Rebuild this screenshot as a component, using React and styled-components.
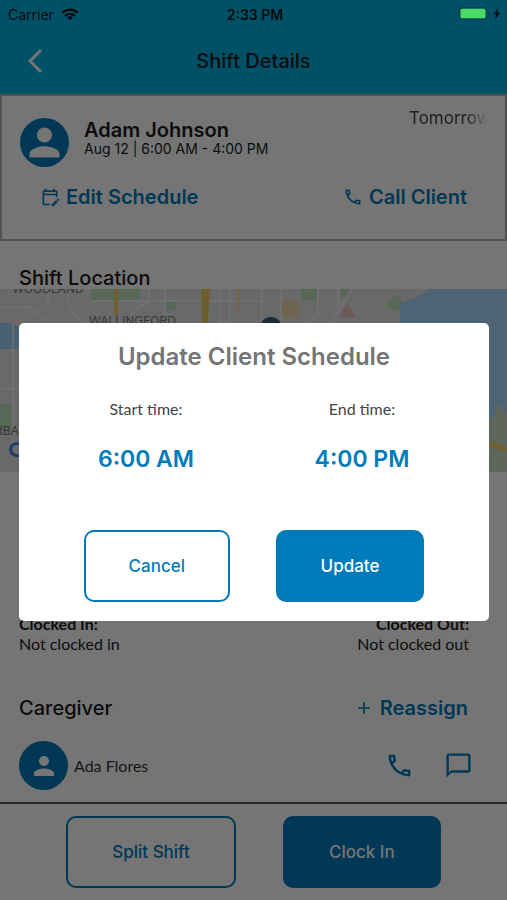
import React from 'react';
import styled, { createGlobalStyle } from 'styled-components';
import {
  MdAdd,
  MdChatBubbleOutline,
  MdOutlineCall,
  MdOutlineEditCalendar,
  MdPerson,
} from 'react-icons/md';

const GlobalStyle = createGlobalStyle`
  * {
    box-sizing: border-box;
  }
  body {
    margin: 0;
    background: #fff;
    font-family: Inter, 'Liberation Sans', sans-serif;
    color: #1c1c1c;
  }
`;

const Screen = styled.div`
  display: flex;
  flex-direction: column;
  min-height: 100vh;
`;

const StatusBar = styled.div`
  position: fixed;
  z-index: 3;
  top: 0;
  left: 0;
  right: 0;
  height: 28px;
  padding: 0 5px 0 8px;
  display: grid;
  grid-template-columns: 1fr auto 1fr;
  align-items: center;
  font-size: 14px;
  color: #00090c;
`;

const StatusGroup = styled.div`
  display: flex;
  align-items: center;
  justify-content: ${({ $end }) => ($end ? 'flex-end' : 'flex-start')};
  gap: 7px;
`;

const Clock = styled.span`
  font-weight: 600;
`;

const AppBar = styled.header`
  display: grid;
  grid-template-columns: 72px 1fr 72px;
  align-items: center;
  height: 94px;
  padding-top: 28px;
  background: #00aede;
`;

const BackButton = styled.button`
  display: flex;
  justify-content: center;
  padding: 0;
  border: 0;
  background: none;
  color: #fff;
`;

const AppTitle = styled.h1`
  margin: 0;
  text-align: center;
  font-size: 20px;
  font-weight: 500;
  line-height: 24px;
`;

const ClientCard = styled.section`
  height: 147px;
  padding: 12px 18px;
  border: 2px solid #b4b4b4;
`;

const ClientRow = styled.div`
  display: flex;
  align-items: flex-start;
  gap: 15px;
`;

const Avatar = styled.div`
  flex: none;
  display: flex;
  align-items: center;
  justify-content: center;
  width: 49px;
  height: 49px;
  margin-top: ${({ $top }) => $top ?? 0}px;
  border-radius: 50%;
  background: #007bba;
  color: #fff;
`;

const ClientText = styled.div`
  flex: 1;
  padding-top: 10px;
`;

const ClientName = styled.h2`
  margin: 0;
  font-size: 20px;
  font-weight: 600;
  line-height: 24px;
`;

const ClientShift = styled.p`
  margin: 0;
  font-size: 14px;
  font-weight: 400;
  line-height: 14px;
`;

const Day = styled.span`
  width: 78px;
  overflow: hidden;
  white-space: nowrap;
  font-size: 17px;
  line-height: 20px;
  color: #444;
  mask-image: linear-gradient(to right, #000 75%, transparent);
`;

const ClientActions = styled.div`
  display: flex;
  justify-content: space-between;
  padding: 18px 20px 0;
`;

const LinkButton = styled.button`
  display: flex;
  align-items: center;
  gap: ${({ $gap }) => $gap ?? 6}px;
  padding: 0;
  border: 0;
  background: none;
  color: #007bba;
  font-family: inherit;
  font-size: 20px;
  font-weight: 600;
  line-height: 24px;
`;

const Heading = styled.h2`
  margin: 0;
  font-size: 20px;
  font-weight: 500;
  line-height: 24px;
`;

const LocationHeading = styled(Heading)`
  padding: 25px 19px 0;
  margin-bottom: -1px;
`;

const Map = styled.svg`
  display: block;
  width: 100%;
  height: 183px;
`;

const ClockTimes = styled.section`
  display: flex;
  justify-content: space-between;
  padding: 142px 38px 0 19px;
  font-family: Lato, sans-serif;
  font-size: 16px;
  line-height: 20px;
`;

const ClockTime = styled.div`
  text-align: ${({ $end }) => ($end ? 'right' : 'left')};
`;

const CaregiverHead = styled.div`
  display: flex;
  justify-content: space-between;
  padding: 42px 39px 0 19px;
`;

const CaregiverRow = styled.div`
  display: flex;
  align-items: center;
  gap: 6px;
  padding: 21px 34px 12px 19px;
`;

const CaregiverName = styled.span`
  flex: 1;
  font-family: Lato, sans-serif;
  font-size: 16px;
  color: #333;
`;

const IconButton = styled.button`
  display: flex;
  margin-left: 24px;
  padding: 0;
  border: 0;
  background: none;
  color: #007bba;
`;

const Button = styled.button`
  height: 72px;
  padding: 0 ${({ $wide }) => ($wide ? 44 : 43)}px;
  border: 2px solid #007bba;
  border-radius: 10px;
  background: ${({ $filled }) => ($filled ? '#007bba' : 'transparent')};
  color: ${({ $filled }) => ($filled ? '#fff' : '#007bba')};
  font-family: inherit;
  font-size: 17px;
  font-weight: 500;
`;

const ButtonRow = styled.div`
  display: flex;
  justify-content: space-evenly;
  padding: 0 ${({ $inset }) => ($inset ? 19 : 0)}px;
`;

const BottomBar = styled.footer`
  flex: 1;
  padding: 12px 0;
  border-top: 2px solid #555;
`;

const Scrim = styled.div`
  position: fixed;
  z-index: 2;
  inset: 0;
  display: flex;
  align-items: center;
  padding: 44px 18px 0 19px;
  background: rgba(0, 0, 0, 0.54);
`;

const Dialog = styled.div`
  flex: 1;
  padding: 19px 0;
  border-radius: 5px;
  background: #fff;
`;

const DialogTitle = styled.h2`
  margin: 0;
  text-align: center;
  font-size: 24px;
  font-weight: 600;
  line-height: 30px;
  color: #757575;
`;

const Times = styled.div`
  display: grid;
  grid-template-columns: 1fr 1fr;
  padding: 27px 19px 56px;
`;

const TimeField = styled.div`
  display: flex;
  flex-direction: column;
  align-items: center;
  gap: 25px;
`;

const TimeLabel = styled.span`
  font-family: Lato, sans-serif;
  font-size: 16px;
  line-height: 20px;
  color: #444;
`;

const TimeButton = styled.button`
  padding: 0;
  border: 0;
  background: none;
  color: #007bba;
  font-family: inherit;
  font-size: 23px;
  font-weight: 600;
  line-height: 30px;
`;

const WifiIcon = () => (
  <svg width="18" height="13" viewBox="0 0 18 13" aria-hidden="true">
    <g fill="none" stroke="currentColor" strokeWidth="2.2">
      <path d="M1.2 4.8a11 11 0 0 1 15.6 0" />
      <path d="M4 7.9a7 7 0 0 1 10 0" />
    </g>
    <path d="M9 12.4 6.2 9.6a4 4 0 0 1 5.6 0z" fill="currentColor" />
  </svg>
);

const BatteryIcon = () => (
  <svg width="43" height="14" viewBox="0 0 43 14" aria-hidden="true">
    <rect x=".5" y=".5" width="27" height="12" rx="3" fill="none" stroke="#003b4b" />
    <rect x="1.5" y="1.7" width="25" height="9.6" rx="1.5" fill="#4cd964" />
    <path d="M29 4.5v4q1.6-.6 1.6-2t-1.6-2z" fill="#003b4b" />
    <path d="m39.5 1-5 6.2h2.8L36 12.4l5.2-6.6h-2.9z" fill="#00090c" />
  </svg>
);

const BackIcon = () => (
  <svg width="16" height="26" viewBox="0 0 16 26" aria-hidden="true">
    <path d="M13 2 2 13l11 11" fill="none" stroke="currentColor" strokeWidth="3" />
  </svg>
);

const LocationMap = () => (
  <Map viewBox="0 0 507 183" preserveAspectRatio="xMidYMid slice" role="img" aria-label="Map">
    <rect width="507" height="183" fill="#e4e5e6" />
    <path d="M0 34h12l7 4v22H0z" fill="#a0d2f6" />
    <g fill="#bfe3c0">
      <path d="M91 0h49v11H91zM165 13h11v8h-11zM301 0h16v11h-16zM341 0h8v8h-8z" />
      <path d="m385 16 12-11 8 11-8 7z" />
      <path d="M0 115h12v26H0z" />
    </g>
    <path d="M281 12h18v17h-18z" fill="#f0dcae" />
    <path d="m339 28 8-14 9 14z" fill="#eebfc0" />
    <path d="M507 0h-78l-8 6-21 9v19l7 149h100z" fill="#aadaff" />
    <path d="M507 124c-8-2-3-9-9-10l-4 14-6 4v51h19z" fill="#cfe0cb" />
    <path d="m488 154 19 7" stroke="#f3d262" strokeWidth="5" />
    <g fill="none" stroke="#f7f7f7" strokeWidth="1.5">
      <path d="M0 18h30l16 14M48 0v18M68 0v12q4 12 14 22M91 12h171M125 34q8-14 24-22V0" />
      <path d="M165 0v34M220 0v34M230 0v34M262 0v34M281 0v34M318 0v24q-3 7-12 10" />
      <path d="M352 0 331 34M338 0v20M0 100h19M13 34v120" />
    </g>
    <path d="M116 0v26" stroke="#edcf65" strokeWidth="4" />
    <path d="M201 0h9l-2 34h-6z" fill="#edcf65" />
    <path d="M238 0v24" stroke="#f0e0a0" strokeWidth="3" />
    <circle cx="271" cy="39" r="11" fill="#3c6573" />
    <path
      d="M19 155a6 6 0 1 0 0 11"
      fill="none"
      stroke="#4285f4"
      strokeWidth="3"
    />
    <g fill="#777" fontFamily="Inter, sans-serif" fontSize="12">
      <text x="12" y="4">WOODLAND</text>
      <text x="89" y="36">WALLINGFORD</text>
      <text x="-5" y="146">RBA</text>
    </g>
  </Map>
);

const UpdateDialog = () => (
  <Scrim>
    <Dialog role="dialog" aria-labelledby="dialog-title">
      <DialogTitle id="dialog-title">Update Client Schedule</DialogTitle>
      <Times>
        <TimeField>
          <TimeLabel id="start">Start time:</TimeLabel>
          <TimeButton aria-describedby="start">6:00 AM</TimeButton>
        </TimeField>
        <TimeField>
          <TimeLabel id="end">End time:</TimeLabel>
          <TimeButton aria-describedby="end">4:00 PM</TimeButton>
        </TimeField>
      </Times>
      <ButtonRow $inset>
        <Button>Cancel</Button>
        <Button $filled>Update</Button>
      </ButtonRow>
    </Dialog>
  </Scrim>
);

const App = () => (
  <>
    <GlobalStyle />
    <StatusBar>
      <StatusGroup>
        Carrier
        <WifiIcon />
      </StatusGroup>
      <Clock>2:33 PM</Clock>
      <StatusGroup $end>
        <BatteryIcon />
      </StatusGroup>
    </StatusBar>
    <Screen>
      <AppBar>
        <BackButton aria-label="Back">
          <BackIcon />
        </BackButton>
        <AppTitle>Shift Details</AppTitle>
      </AppBar>
      <ClientCard>
        <ClientRow>
          <Avatar $top={10}>
            <MdPerson size={45} />
          </Avatar>
          <ClientText>
            <ClientName>Adam Johnson</ClientName>
            <ClientShift>Aug 12 | 6:00 AM - 4:00 PM</ClientShift>
          </ClientText>
          <Day>Tomorrow</Day>
        </ClientRow>
        <ClientActions>
          <LinkButton>
            <MdOutlineEditCalendar size={20} />
            Edit Schedule
          </LinkButton>
          <LinkButton>
            <MdOutlineCall size={20} />
            Call Client
          </LinkButton>
        </ClientActions>
      </ClientCard>
      <LocationHeading>Shift Location</LocationHeading>
      <LocationMap />
      <ClockTimes>
        <ClockTime>
          <b>Clocked In:</b>
          <div>Not clocked in</div>
        </ClockTime>
        <ClockTime $end>
          <b>Clocked Out:</b>
          <div>Not clocked out</div>
        </ClockTime>
      </ClockTimes>
      <CaregiverHead>
        <Heading>Caregiver</Heading>
        <LinkButton $gap={6}>
          <MdAdd size={20} />
          Reassign
        </LinkButton>
      </CaregiverHead>
      <CaregiverRow>
        <Avatar>
          <MdPerson size={30} />
        </Avatar>
        <CaregiverName>Ada Flores</CaregiverName>
        <IconButton aria-label="Call caregiver">
          <MdOutlineCall size={29} />
        </IconButton>
        <IconButton aria-label="Message caregiver">
          <MdChatBubbleOutline size={29} />
        </IconButton>
      </CaregiverRow>
      <BottomBar>
        <ButtonRow $inset>
          <Button $wide>Split Shift</Button>
          <Button $wide $filled>
            Clock In
          </Button>
        </ButtonRow>
      </BottomBar>
    </Screen>
    <UpdateDialog />
  </>
);

export default App;
